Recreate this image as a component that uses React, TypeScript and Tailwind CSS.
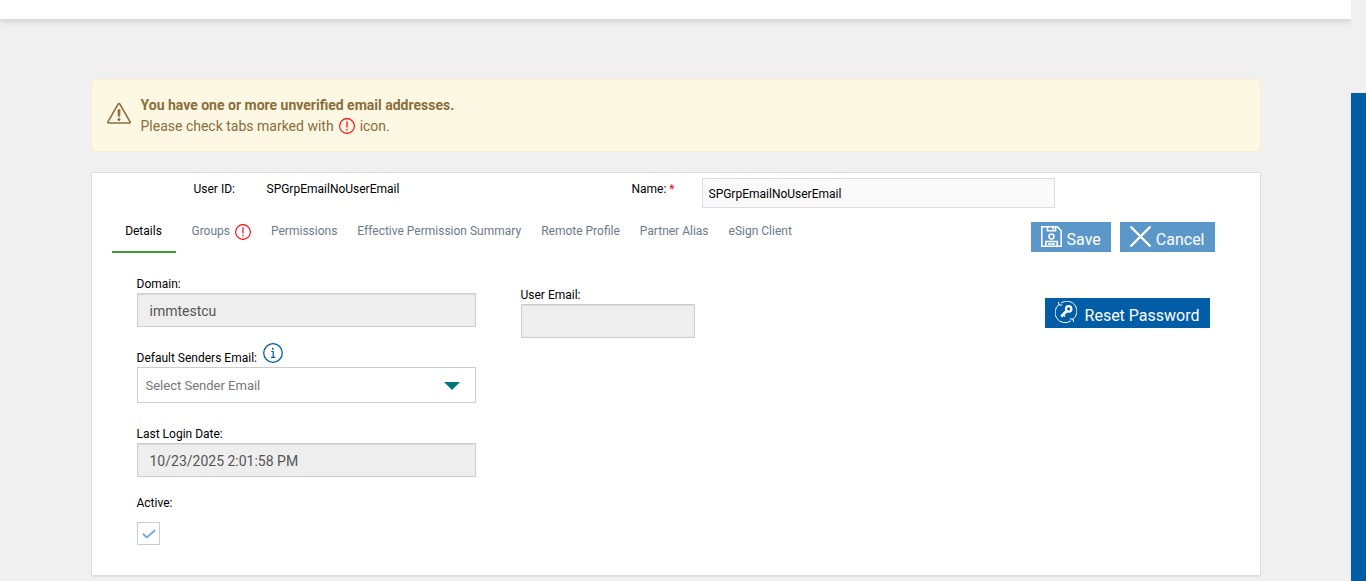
import React from "react";

const tabs = [
  { name: "Details", active: true },
  { name: "Groups", warning: true },
  { name: "Permissions" },
  { name: "Effective Permission Summary" },
  { name: "Remote Profile" },
  { name: "Partner Alias" },
  { name: "eSign Client" },
];

const readOnlyInput =
  "block h-[34px] w-full border border-[#ccc] bg-[#eee] px-3 pt-[2px] text-sm text-[#555] shadow-[inset_0_1px_1px_rgba(0,0,0,0.08)] outline-none";

function AlertCircle() {
  return (
    <span className="flex shrink-0 pt-[2px]">
      <svg className="h-4 w-4" viewBox="0 0 16 16" fill="none" stroke="#f00">
        <circle cx="8" cy="8" r="7.4" strokeWidth="1.1" />
        <path d="M8 3.2v6.3M8 11v1.5" strokeWidth="1.2" />
      </svg>
    </span>
  );
}

function WarningTriangle() {
  return (
    <svg
      className="h-6 w-6 shrink-0"
      viewBox="0 0 24 24"
      fill="none"
      stroke="#8a6d3b"
    >
      <path
        d="M11.2 2 .9 19.8c-.4.7 0 1.1.6 1.1h21c.6 0 1-.4.6-1.1L12.8 2c-.4-.7-1.2-.7-1.6 0Z"
        strokeWidth="1.5"
      />
      <path d="M10.9 7.7h2.2l-.4 6.6h-1.4Z" fill="#8a6d3b" strokeWidth=".8" />
      <circle cx="12" cy="17.5" r="1.2" fill="#8a6d3b" strokeWidth=".6" />
    </svg>
  );
}

function InfoIcon() {
  return (
    <svg
      className="h-5 w-5"
      viewBox="0 0 20 20"
      fill="none"
      stroke="#005da6"
    >
      <circle cx="10" cy="10" r="9.3" strokeWidth="1.3" />
      <circle cx="9.9" cy="5.8" r="1" fill="#005da6" stroke="none" />
      <path d="M8.2 8.5h2v5.6M8 14.3h4.2" strokeWidth="1.2" />
    </svg>
  );
}

function SaveIcon() {
  return (
    <svg
      className="mb-[2px] h-[21px] w-[21px]"
      viewBox="0 0 21 21"
      fill="none"
      stroke="#fff"
      strokeWidth="1.6"
    >
      <path d="M.8.8h15.4l4 4v15.4H.8Z" />
      <path d="M6.5.8v4h8v-4M12 1v2.4" />
      <circle cx="10.500" cy="10.500" r="2.500" />
      <path d="M4.800 20v-4.500h11.400V20M7 18h7" />
    </svg>
  );
}

function CancelIcon() {
  return (
    <svg
      className="mb-[2px] h-[21px] w-[21px]"
      viewBox="0 0 20 20"
      fill="none"
      stroke="#fff"
      strokeWidth="2.3"
      strokeLinecap="round"
    >
      <path d="m1.2 1.2 17.6 17.6M18.8 1.2 1.2 18.8" />
    </svg>
  );
}

function ResetIcon() {
  return (
    <svg
      className="mb-[2px] h-[22px] w-[22px]"
      viewBox="0 0 22 22"
      fill="none"
      stroke="#fff"
      strokeWidth="1"
    >
      <path d="M6.200 1.900a10 10 0 0 1 11.500 16.500M15.800 19.900A10 10 0 0 1 4.300 3.400" />
      <path d="M3.400 1l.6 2.900 3.200.2M18.600 21l-.6-2.900-3.200-.2" />
      <circle cx="13.700" cy="7.900" r="2.700" strokeWidth="2.200" />
      <path d="m11.600 10-5.400 5.600" strokeWidth="2.800" />
      <path d="m8.500 14.300 1.500 1.200" strokeWidth="1.400" />
    </svg>
  );
}

function Notice() {
  return (
    <div className="flex h-[73px] items-center gap-[10px] rounded border border-[#faebcc] bg-[#fcf8e3] px-[15px] pt-px text-sm leading-[21px] text-[#8a6d3b]">
      <div className="pb-1">
        <WarningTriangle />
      </div>
      <div>
        <p className="font-bold">
          You have one or more unverified email addresses.
        </p>
        <p className="flex items-start gap-[5px]">
          Please check tabs marked with <AlertCircle /> icon.
        </p>
      </div>
    </div>
  );
}

function Tabs() {
  return (
    <nav className="flex">
      {tabs.map((tab) =>
        tab.active ? (
          <a
            key={tab.name}
            href="#"
            className="mr-[6px] h-[34px] w-16 border-b-2 border-[#3f9c35] pt-[3px] text-center text-black"
          >
            {tab.name}
          </a>
        ) : (
          <a
            key={tab.name}
            href="#"
            className="flex items-start gap-[5px] px-[10px] pt-[3px] text-[#6c7a89]"
          >
            {tab.name}
            {tab.warning && <AlertCircle />}
          </a>
        )
      )}
    </nav>
  );
}

function UserForm() {
  return (
    <div className="grid grid-cols-[339px_174px_1fr] gap-x-[45px] pr-[50px] pl-[45px]">
      <div>
        <label htmlFor="domain" className="block">
          Domain:
        </label>
        <input
          id="domain"
          className={readOnlyInput}
          value="immtestcu"
          readOnly
        />

        <div className="mt-4 flex h-6 gap-[6px]">
          <label htmlFor="sender" className="self-end">
            Default Senders Email:
          </label>
          <InfoIcon />
        </div>
        <div className="relative">
          <select
            id="sender"
            className="block h-9 w-full appearance-none border border-[#ccc] bg-white px-2 pt-[2px] text-[13px] text-[#777] outline-none"
          >
            <option>Select Sender Email</option>
          </select>
          <svg
            className="pointer-events-none absolute top-[15px] right-4 h-2 w-4"
            viewBox="0 0 16 8"
            fill="#007681"
          >
            <path d="M0 0h16L8 8Z" />
          </svg>
        </div>

        <label htmlFor="lastLogin" className="mt-[22px] block">
          Last Login Date:
        </label>
        <input
          id="lastLogin"
          className={readOnlyInput}
          value="10/23/2025 2:01:58 PM"
          readOnly
        />

        <label htmlFor="active" className="mt-[17px] block">
          Active:
        </label>
        <div className="relative mt-[10px] h-[23px] w-[23px]">
          <input
            id="active"
            type="checkbox"
            className="block h-full w-full appearance-none border border-[#ccc] bg-white"
            defaultChecked
          />
          <svg
            className="pointer-events-none absolute top-[7px] left-[5px] h-[10px] w-[14px]"
            viewBox="0 0 14 10"
            fill="none"
            stroke="#7aadd8"
            strokeWidth="2"
          >
            <path d="m.8 4.8 4 3.7L13.3 1" />
          </svg>
        </div>
      </div>

      <div className="pt-[11px]">
        <label htmlFor="userEmail" className="block">
          User Email:
        </label>
        <input id="userEmail" className={readOnlyInput} value="" readOnly />
      </div>

      <div className="flex items-start justify-end pt-[23px]">
        <button className="flex h-[30px] items-center gap-2 bg-[#005da6] px-[10px] text-base text-white">
          <ResetIcon />
          <span className="pt-[5px]">Reset Password</span>
        </button>
      </div>
    </div>
  );
}

export default function App() {
  return (
    <div className="flex min-h-screen bg-[#f0f0f0] font-[Roboto,sans-serif] text-xs leading-[18px] text-black">
      <div className="min-w-0 flex-1 overflow-hidden">
        <header className="h-[19px] bg-white shadow-[0_2px_6px_rgba(0,0,0,0.15)]" />
        <main className="mx-auto mt-[60px] max-w-[1170px]">
          <Notice />

          <section className="mt-5 border border-[#ddd] bg-white pb-[30px] shadow-[0_1px_1px_rgba(0,0,0,0.05)]">
            <div className="flex pt-[5px] pl-[102px]">
              <p className="w-[73px] pt-[2px]">User ID:</p>
              <p className="w-[365px] pt-[2px]">SPGrpEmailNoUserEmail</p>
              <label htmlFor="name" className="w-[70px] pt-[2px]">
                Name: <span className="text-[#f00]">*</span>
              </label>
              <input
                id="name"
                className="h-[30px] w-[353px] border border-[#ddd] bg-[#fafafa] px-[6px] pt-[2px] outline-none"
                defaultValue="SPGrpEmailNoUserEmail"
              />
            </div>

            <div className="mt-[11px] flex items-start justify-between pr-[45px] pl-5">
              <Tabs />
              <div className="mt-[3px] flex gap-[9px] text-base text-white">
                <button className="flex h-[30px] items-center gap-[5px] bg-[#5b97c8] px-[10px]">
                  <SaveIcon />
                  <span className="pt-[5px]">Save</span>
                </button>
                <button className="flex h-[30px] items-center gap-[5px] bg-[#5b97c8] px-[10px]">
                  <CancelIcon />
                  <span className="pt-[5px]">Cancel</span>
                </button>
              </div>
            </div>

            <div className="mt-[22px]">
              <UserForm />
            </div>
          </section>
        </main>
      </div>
      <aside className="w-[15px] pt-[93px]">
        <div className="h-full bg-[#005da6]" />
      </aside>
    </div>
  );
}
